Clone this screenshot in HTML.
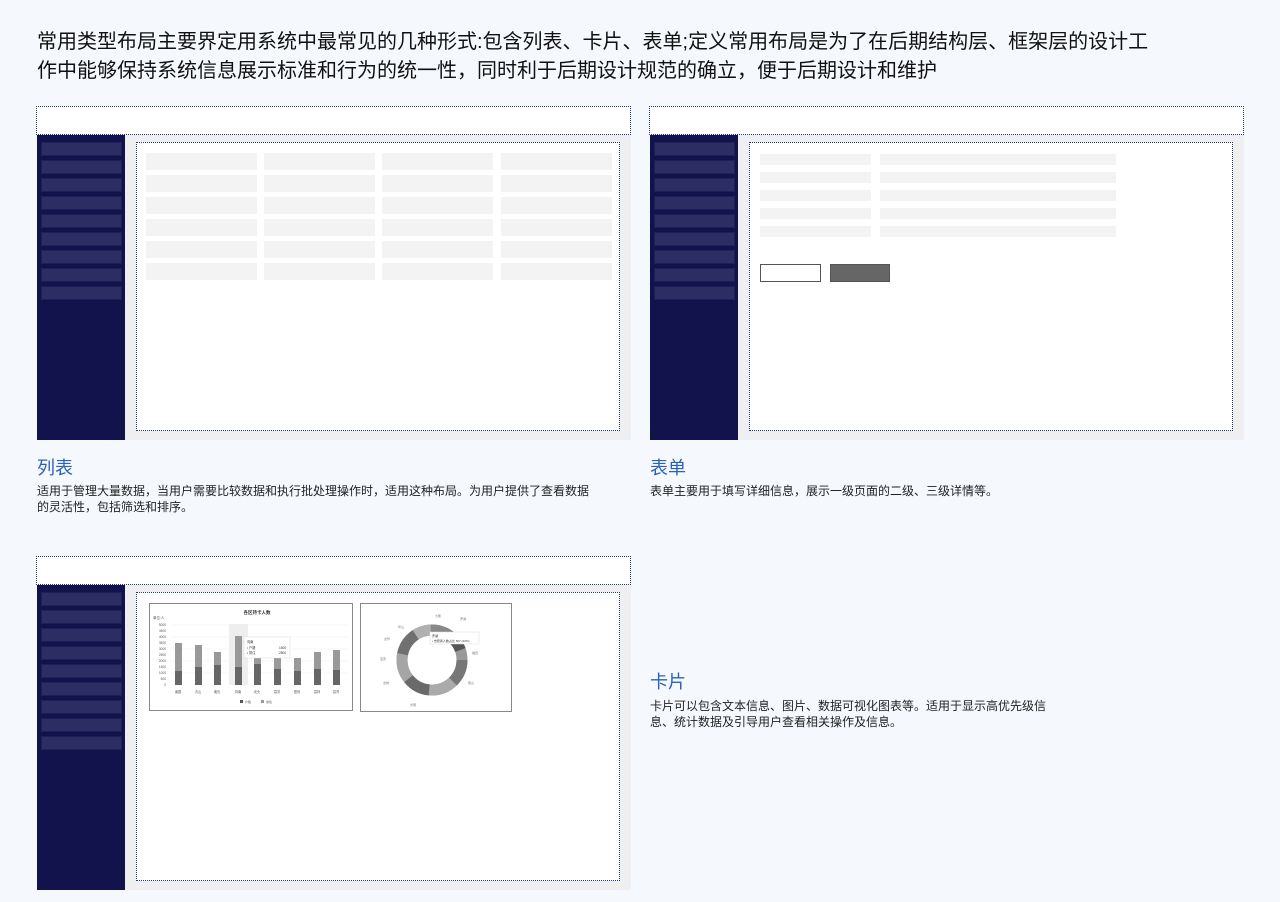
<!DOCTYPE html>
<html><head><meta charset="utf-8"><style>
*{margin:0;padding:0;box-sizing:border-box}
body{width:1280px;height:902px;background:#f5f8fd;font-family:"Liberation Sans","Noto Sans CJK SC",sans-serif;position:relative;overflow:hidden;color:#111}
.a{position:absolute}
.intro{left:37px;top:28px;font-size:20px;line-height:29px;white-space:nowrap;color:#111}
.hd{position:absolute;height:29px;background:#fff;border:1.5px dotted #1d3a8a}
.sb{position:absolute;width:89px;background:#12134c}
.sb i{display:block;position:absolute;left:4px;width:81px;height:14px;background:#2c2d62;border:1px solid #1e1f58}
.ct{position:absolute;width:506px;background:#efeff1}
.in{position:absolute;background:#fff;border:1.5px dotted #1d3a8a}
.c{position:absolute;background:#f3f3f3}
.t{position:absolute;font-size:18px;color:#2a62b8}
.d{position:absolute;font-size:12px;line-height:16px;color:#222}
</style></head><body>
<div class="a intro">常用类型布局主要界定用系统中最常见的几种形式:包含列表、卡片、表单;定义常用布局是为了在后期结构层、框架层的设计工<br>作中能够保持系统信息展示标准和行为的统一性，同时利于后期设计规范的确立，便于后期设计和维护</div>

<div class="hd" style="left:36px;top:106px;width:595px"></div>
<div class="sb" style="left:37px;top:135px;height:305px">
<i style="top:7px"></i><i style="top:25px"></i><i style="top:43px"></i><i style="top:61px"></i><i style="top:79px"></i><i style="top:97px"></i><i style="top:115px"></i><i style="top:133px"></i><i style="top:151px"></i></div>
<div class="ct" style="left:125px;top:135px;height:305px"></div>
<div class="in" style="left:136px;top:142px;width:484px;height:289px"></div>
<div id="tbl"></div>

<div class="hd" style="left:649px;top:106px;width:595px"></div>
<div class="sb" style="left:650px;top:135px;height:305px">
<i style="top:7px"></i><i style="top:25px"></i><i style="top:43px"></i><i style="top:61px"></i><i style="top:79px"></i><i style="top:97px"></i><i style="top:115px"></i><i style="top:133px"></i><i style="top:151px"></i></div>
<div class="ct" style="left:738px;top:135px;height:305px"></div>
<div class="in" style="left:749px;top:142px;width:484px;height:289px"></div>
<div class="c" style="left:760px;top:154px;width:111px;height:11px"></div><div class="c" style="left:880px;top:154px;width:236px;height:11px"></div>
<div class="c" style="left:760px;top:172px;width:111px;height:11px"></div><div class="c" style="left:880px;top:172px;width:236px;height:11px"></div>
<div class="c" style="left:760px;top:190px;width:111px;height:11px"></div><div class="c" style="left:880px;top:190px;width:236px;height:11px"></div>
<div class="c" style="left:760px;top:208px;width:111px;height:11px"></div><div class="c" style="left:880px;top:208px;width:236px;height:11px"></div>
<div class="c" style="left:760px;top:226px;width:111px;height:11px"></div><div class="c" style="left:880px;top:226px;width:236px;height:11px"></div>
<div class="a" style="left:760px;top:264px;width:61px;height:18px;border:1.5px solid #555;background:#fff"></div>
<div class="a" style="left:830px;top:264px;width:60px;height:18px;background:#666;border:1px solid #555"></div>

<div class="t" style="left:37px;top:454px">列表</div>
<div class="d" style="left:37px;top:483px">适用于管理大量数据，当用户需要比较数据和执行批处理操作时，适用这种布局。为用户提供了查看数据<br>的灵活性，包括筛选和排序。</div>
<div class="t" style="left:650px;top:454px">表单</div>
<div class="d" style="left:650px;top:483px">表单主要用于填写详细信息，展示一级页面的二级、三级详情等。</div>

<div class="hd" style="left:36px;top:556px;width:595px"></div>
<div class="sb" style="left:37px;top:585px;height:305px">
<i style="top:7px"></i><i style="top:25px"></i><i style="top:43px"></i><i style="top:61px"></i><i style="top:79px"></i><i style="top:97px"></i><i style="top:115px"></i><i style="top:133px"></i><i style="top:151px"></i></div>
<div class="ct" style="left:125px;top:585px;height:305px"></div>
<div class="in" style="left:136px;top:592px;width:484px;height:289px"></div>

<svg class="a" style="left:149px;top:603px" width="204" height="109" viewBox="0 0 204 109">
<rect x="0.5" y="0.5" width="203" height="107" fill="#fff" stroke="#888"/>
<text x="108" y="11" font-size="4.5" text-anchor="middle" fill="#333" font-weight="bold">各区持卡人数</text>
<text x="4" y="16" font-size="3.5" fill="#555">单位:人</text>
<g stroke="#eee" stroke-width="0.5"><line x1="22" y1="22" x2="200" y2="22"/><line x1="22" y1="34" x2="200" y2="34"/><line x1="22" y1="46" x2="200" y2="46"/><line x1="22" y1="58" x2="200" y2="58"/><line x1="22" y1="70" x2="200" y2="70"/></g>
<g font-size="3.2" fill="#555" text-anchor="end"><text x="17" y="23">5000</text><text x="17" y="29">4500</text><text x="17" y="35">4000</text><text x="17" y="41">3500</text><text x="17" y="47">3000</text><text x="17" y="53">2500</text><text x="17" y="59">2000</text><text x="17" y="65">1500</text><text x="17" y="71">1000</text><text x="17" y="77">500</text><text x="17" y="83">0</text></g>
<rect x="80" y="21" width="19" height="61" fill="#eee"/>
<g fill="#999"><rect x="26" y="40" width="7" height="42"/><rect x="46" y="42" width="7" height="40"/><rect x="65" y="49" width="7" height="33"/><rect x="86" y="33" width="7" height="49"/><rect x="105" y="50" width="7" height="32"/><rect x="125" y="50" width="7" height="32"/><rect x="145" y="55" width="7" height="27"/><rect x="165" y="49" width="7" height="33"/><rect x="184" y="47" width="7" height="35"/></g>
<g fill="#666"><rect x="26" y="68" width="7" height="14"/><rect x="46" y="64" width="7" height="18"/><rect x="65" y="62" width="7" height="20"/><rect x="86" y="64" width="7" height="18"/><rect x="105" y="61" width="7" height="21"/><rect x="125" y="66" width="7" height="16"/><rect x="145" y="68" width="7" height="14"/><rect x="165" y="66" width="7" height="16"/><rect x="184" y="67" width="7" height="15"/></g>
<rect x="95" y="34" width="46" height="21" fill="#fff" stroke="#ddd" stroke-width="0.5"/>
<g font-size="3.2" fill="#333"><text x="98" y="40">向南</text><text x="98" y="46">• 户籍</text><text x="130" y="46">1500</text><text x="98" y="51">• 常住</text><text x="130" y="51">2500</text></g>
<g font-size="3.2" fill="#555" text-anchor="middle"><text x="29" y="90">南园</text><text x="49" y="90">青山</text><text x="68" y="90">南光</text><text x="89" y="90">向南</text><text x="108" y="90">北头</text><text x="128" y="90">荔芳</text><text x="148" y="90">登良</text><text x="168" y="90">荔林</text><text x="187" y="90">荔湾</text></g>
<rect x="91" y="97" width="3" height="3" fill="#555"/><text x="96" y="100" font-size="3" fill="#555">户籍</text>
<rect x="112" y="97" width="3" height="3" fill="#999"/><text x="117" y="100" font-size="3" fill="#555">常住</text>
</svg>

<svg class="a" style="left:360px;top:603px" width="152" height="110" viewBox="0 0 152 110">
<rect x="0.5" y="0.5" width="151" height="108" fill="#fff" stroke="#888"/>
<g fill="none" stroke-width="11">
<circle cx="72" cy="57" r="30" stroke="#999"/>
<circle cx="72" cy="57" r="30" stroke="#777" stroke-dasharray="24 165" stroke-dashoffset="0"/>
<circle cx="72" cy="57" r="30" stroke="#aaa" stroke-dasharray="26 163" stroke-dashoffset="-24"/>
<circle cx="72" cy="57" r="30" stroke="#6a6a6a" stroke-dasharray="24 165" stroke-dashoffset="-50"/>
<circle cx="72" cy="57" r="30" stroke="#a5a5a5" stroke-dasharray="26 163" stroke-dashoffset="-74"/>
<circle cx="72" cy="57" r="30" stroke="#707070" stroke-dasharray="24 165" stroke-dashoffset="-100"/>
<circle cx="72" cy="57" r="30" stroke="#b0b0b0" stroke-dasharray="16 173" stroke-dashoffset="-124"/>
<circle cx="72" cy="57" r="30" stroke="#888" stroke-dasharray="26 163" stroke-dashoffset="-140"/>
<circle cx="72" cy="57" r="30" stroke="#555" stroke-dasharray="12 177" stroke-dashoffset="-166"/>
</g>
<rect x="70" y="29" width="49" height="12" fill="#fff" stroke="#ddd" stroke-width="0.5"/>
<text x="72" y="34" font-size="3" fill="#333">罗湖</text><text x="72" y="39" font-size="3" fill="#333">• 志愿者人数占比 667 (20%)</text>
<g font-size="3" fill="#777"><text x="75" y="14">大鹏</text><text x="100" y="17">罗湖</text><text x="112" y="51">福田</text><text x="108" y="81">南山</text><text x="50" y="103">光明</text><text x="23" y="81">龙岗</text><text x="20" y="57">宝安</text><text x="24" y="37">龙华</text><text x="38" y="25">坪山</text></g>
</svg>

<div class="t" style="left:650px;top:668px">卡片</div>
<div class="d" style="left:650px;top:698px">卡片可以包含文本信息、图片、数据可视化图表等。适用于显示高优先级信<br>息、统计数据及引导用户查看相关操作及信息。</div>

<script>
var t=document.getElementById('tbl'),xs=[146,264,382,501],h='';
for(var r=0;r<6;r++)for(var c=0;c<4;c++)h+='<div class="c" style="left:'+xs[c]+'px;top:'+(153+r*22)+'px;width:111px;height:17px"></div>';
t.innerHTML=h;
</script>
</body></html>
